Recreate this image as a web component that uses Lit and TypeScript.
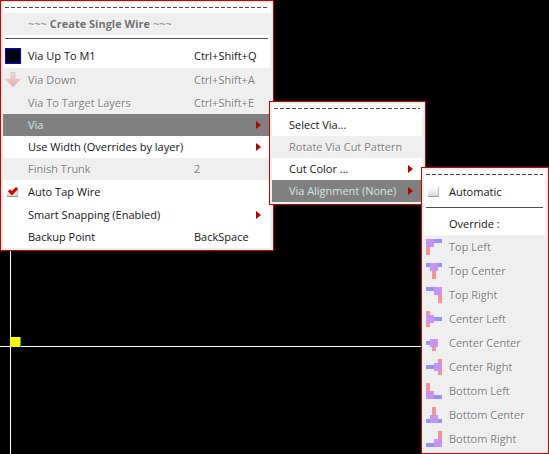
import { LitElement, html, svg, css, nothing } from "lit";
import { customElement, property } from "lit/decorators.js";
import { classMap } from "lit/directives/class-map.js";

interface Item {
  kind?: "tear" | "separator";
  label?: string;
  shortcut?: string;
  icon?: string;
  tall?: boolean;
  disabled?: boolean;
  active?: boolean;
  submenu?: boolean;
  title?: boolean;
}

type Block = [color: "r" | "b" | "p", x: number, y: number, w: number, h: number];

const fills = { r: "#f79292", b: "#9792f7", p: "#c892f7" };

const alignments: Record<string, Block[]> = {
  "Top Left": [["p", 0, 0, 8, 8], ["b", 8, 0, 8, 4], ["r", 0, 8, 4, 8]],
  "Top Center": [["b", 0, 0, 16, 4], ["p", 4, 0, 8, 8], ["r", 6, 8, 4, 8]],
  "Top Right": [["b", 0, 0, 8, 4], ["p", 8, 0, 8, 8], ["r", 12, 8, 4, 8]],
  "Center Left": [["r", 0, 0, 4, 16], ["p", 0, 4, 8, 8], ["b", 8, 6, 8, 4]],
  "Center Center": [["b", 0, 6, 4, 4], ["p", 4, 4, 8, 8], ["r", 6, 12, 4, 4]],
  "Center Right": [["r", 12, 0, 4, 16], ["p", 8, 4, 8, 8], ["b", 0, 6, 8, 4]],
  "Bottom Left": [["r", 0, 0, 4, 8], ["p", 0, 8, 8, 8], ["b", 8, 12, 8, 4]],
  "Bottom Center": [["r", 6, 0, 4, 8], ["b", 0, 12, 16, 4], ["p", 4, 8, 8, 8]],
  "Bottom Right": [["r", 12, 0, 4, 8], ["p", 8, 8, 8, 8], ["b", 0, 12, 8, 4]],
};

const wireMenu: Item[] = [
  { kind: "tear" },
  { label: "Create Single Wire", title: true, disabled: true },
  { kind: "separator" },
  { label: "Via Up To M1", shortcut: "Ctrl+Shift+Q", icon: "layer", tall: true },
  { label: "Via Down", shortcut: "Ctrl+Shift+A", icon: "down", tall: true, disabled: true },
  { label: "Via To Target Layers", shortcut: "Ctrl+Shift+E", disabled: true },
  { label: "Via", submenu: true, active: true },
  { label: "Use Width (Overrides by layer)", submenu: true },
  { label: "Finish Trunk", shortcut: "2", disabled: true },
  { label: "Auto Tap Wire", icon: "checked", tall: true },
  { label: "Smart Snapping (Enabled)", submenu: true },
  { label: "Backup Point", shortcut: "BackSpace" },
];

const viaMenu: Item[] = [
  { kind: "tear" },
  { label: "Select Via..." },
  { label: "Rotate Via Cut Pattern", disabled: true },
  { label: "Cut Color ...", submenu: true },
  { label: "Via Alignment (None)", submenu: true, active: true },
];

const alignMenu: Item[] = [
  { kind: "tear" },
  { label: "Automatic", icon: "unchecked", tall: true },
  { kind: "separator" },
  { label: "Override :" },
  ...Object.keys(alignments).map((label) => ({ label, icon: label, tall: true, disabled: true })),
];

@customElement("menu-icon")
class MenuIcon extends LitElement {
  @property() name = "";

  static styles = css`
    :host { display: block; width: 16px; height: 16px; }
    svg { display: block; }
  `;

  private content() {
    switch (this.name) {
      case "layer":
        return svg`
          <defs><pattern id="dots" width="4" height="4" patternUnits="userSpaceOnUse">
            <rect x="1" y="2" width="1" height="1" fill="#000078"/>
            <rect x="3" y="0" width="1" height="1" fill="#000078"/>
          </pattern></defs>
          <rect width="16" height="16" fill="#00f"/>
          <rect x="1" y="1" width="14" height="14" fill="#000"/>
          <rect x="1" y="1" width="14" height="14" fill="url(#dots)"/>`;
      case "down":
        return svg`
          <defs><linearGradient id="fade" x1="0" y1="0" x2="0" y2="1">
            <stop offset="0" stop-color="#ecdcdc"/><stop offset="1" stop-color="#e5a9a9"/>
          </linearGradient></defs>
          <path d="M6 .5h4v6.8h5.2L8 14.8.8 7.3H6z" fill="url(#fade)" stroke="#deb9b9" stroke-width=".7"/>`;
      case "checked":
      case "unchecked":
        return svg`
          <defs><linearGradient id="box" x1="0" y1="0" x2="0" y2="1">
            <stop offset="0" stop-color="#fff"/><stop offset="1" stop-color="#d4d4d4"/>
          </linearGradient></defs>
          <rect x="2" y="3" width="11" height="10" fill="url(#box)"/>
          <path d="M12.5 3v10" stroke="#c4c4c4"/>
          <path d="M2 12.5h11" stroke="#999"/>
          ${this.name === "checked"
            ? svg`<path d="M4 6.2 6.9 9.4 12 4" fill="none" stroke="#d40000" stroke-width="3"/>`
            : nothing}`;
      default:
        return (alignments[this.name] ?? []).map(
          ([c, x, y, w, h]) => svg`<rect x=${x} y=${y} width=${w} height=${h} fill=${fills[c]}/>`,
        );
    }
  }

  render() {
    return html`<svg width="16" height="16" viewBox="0 0 16 16" shape-rendering=${this.name in alignments || this.name === "layer" ? "crispEdges" : "auto"}>${this.content()}</svg>`;
  }
}

@customElement("popup-menu")
class PopupMenu extends LitElement {
  @property({ attribute: false }) items: Item[] = [];

  static styles = css`
    :host {
      display: block;
      box-sizing: border-box;
      border: 1px solid #c80000;
      background: #efefef;
      padding: 2px;
      font: 11px/22px "Open Sans", "Noto Sans", sans-serif;
      color: #141414;
      white-space: pre;
    }
    .tear { height: 10px; background: #fff; padding: 4px 3px 0 2px; box-sizing: border-box; }
    .dash { height: 1px; background: repeating-linear-gradient(90deg, #484848 0 4px, #fff 4px 6px); }
    .separator { height: 9px; background: #fff; padding: 3px 2px 0; box-sizing: border-box; margin-right: 1px; }
    .rule { height: 1px; background: #505050; }
    .row {
      display: grid;
      grid-template-columns: var(--gutter, 25px) var(--label, auto) 1fr auto;
      align-items: center;
      height: 22px;
      margin-right: 1px;
      background: #fff;
    }
    .tall { height: 24px; }
    .disabled { background: #efefef; color: #7c7c7c; text-shadow: 1px 1px 0 #fff; }
    .active { background: #808080; color: #d5e3e3; letter-spacing: -0.03px; }
    .icon { padding-left: 2px; }
    .name { font-weight: 700; color: #707070; }
    .arrow { width: 5px; height: 8px; margin-right: 9px; display: block; }
  `;

  private row(item: Item) {
    if (item.kind === "tear") return html`<div class="tear"><div class="dash"></div></div>`;
    if (item.kind === "separator") return html`<div class="separator"><div class="rule"></div></div>`;
    const classes = { row: true, tall: !!item.tall, disabled: !!item.disabled, active: !!item.active };
    return html`<div class=${classMap(classes)}>
      <div class="icon">${item.icon ? html`<menu-icon .name=${item.icon}></menu-icon>` : nothing}</div>
      <div>${item.title ? html`~~~ <span class="name">${item.label}</span> ~~~` : item.label}</div>
      <div>${item.shortcut ?? nothing}</div>
      ${item.submenu
        ? html`<svg class="arrow" viewBox="0 0 5 8"><path d="M0 0 5 4 0 8z" fill="#b80000"/></svg>`
        : nothing}
    </div>`;
  }

  render() {
    return this.items.map((item) => this.row(item));
  }
}

@customElement("app-root")
class AppRoot extends LitElement {
  static styles = css`
    :host { display: block; position: relative; width: 549px; height: 454px; overflow: hidden; background: #000; }
    .axis-x { position: absolute; left: 0; top: 346px; width: 549px; height: 1px; background: #fff; }
    .axis-y { position: absolute; left: 10px; top: 0; width: 1px; height: 454px; background: #fff; }
    .marker { position: absolute; left: 10px; top: 337px; width: 10px; height: 10px; background: #ff0; border-right: 1px solid #00b450; }
    .wire { position: absolute; left: 0; top: 0; width: 274px; --label: 166px; }
    .via { position: absolute; left: 269px; top: 101px; width: 157px; --gutter: 17px; }
    .align { position: absolute; left: 421px; top: 167px; width: 128px; }
  `;

  render() {
    return html`
      <div class="axis-x"></div>
      <div class="axis-y"></div>
      <div class="marker"></div>
      <popup-menu class="wire" .items=${wireMenu}></popup-menu>
      <popup-menu class="via" .items=${viaMenu}></popup-menu>
      <popup-menu class="align" .items=${alignMenu}></popup-menu>
    `;
  }
}
